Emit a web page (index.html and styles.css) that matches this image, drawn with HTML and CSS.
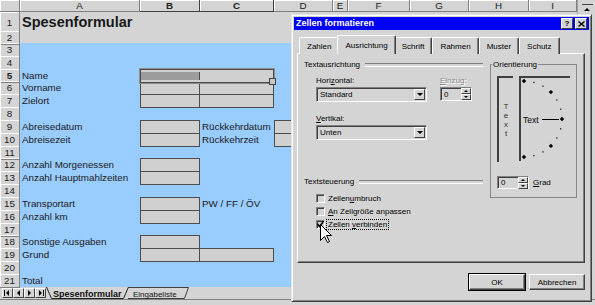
FILE: index.html
```html
<!DOCTYPE html>
<html lang="de">
<head>
    <meta charset="UTF-8">
    <title>Spesenformular - Zellen formatieren</title>
    <link rel="stylesheet" href="styles.css">
</head>
<body>
<div class="excel">
    <div class="sheet-area">
        <div class="sheet">
            <div class="row heads">
                <div class="corner"></div>
                <div class="ch">A</div>
                <div class="ch on">B</div>
                <div class="ch on">C</div>
                <div class="ch">D</div>
                <div class="ch">E</div>
                <div class="ch">F</div>
                <div class="ch">G</div>
                <div class="ch">H</div>
                <div class="ch">I</div>
            </div>
            <div class="row tall"><div class="rh">1</div><div class="a title">Spesenformular</div></div>
            <div class="row short"><div class="rh">2</div></div>
            <div class="row blue"><div class="rh">3</div></div>
            <div class="row blue"><div class="rh">4</div></div>
            <div class="row blue">
                <div class="rh on">5</div><div class="a">Name</div>
                <div class="sel"><span class="cur"></span><span></span></div>
            </div>
            <div class="row blue"><div class="rh">6</div><div class="a">Vorname</div><div class="b box"></div><div class="c box"></div></div>
            <div class="row blue"><div class="rh">7</div><div class="a">Zielort</div><div class="b box"></div><div class="c box"></div></div>
            <div class="row blue"><div class="rh">8</div></div>
            <div class="row blue"><div class="rh">9</div><div class="a">Abreisedatum</div><div class="b box"></div><div class="c">Rückkehrdatum</div><div class="d box"></div></div>
            <div class="row blue"><div class="rh">10</div><div class="a">Abreisezeit</div><div class="b box"></div><div class="c">Rückkehrzeit</div><div class="d box"></div></div>
            <div class="row blue"><div class="rh">11</div></div>
            <div class="row blue"><div class="rh">12</div><div class="a">Anzahl Morgenessen</div><div class="b box"></div></div>
            <div class="row blue"><div class="rh">13</div><div class="a">Anzahl Hauptmahlzeiten</div><div class="b box"></div></div>
            <div class="row blue"><div class="rh">14</div></div>
            <div class="row blue"><div class="rh">15</div><div class="a">Transportart</div><div class="b box"></div><div class="c">PW / FF / ÖV</div></div>
            <div class="row blue"><div class="rh">16</div><div class="a">Anzahl km</div><div class="b box"></div></div>
            <div class="row blue"><div class="rh">17</div></div>
            <div class="row blue"><div class="rh">18</div><div class="a">Sonstige Ausgaben</div><div class="b box"></div></div>
            <div class="row blue"><div class="rh">19</div><div class="a">Grund</div><div class="b box"></div><div class="c box"></div></div>
            <div class="row blue"><div class="rh">20</div></div>
            <div class="row blue"><div class="rh">21</div><div class="a">Total</div></div>
        </div>
        <div class="vscroll">
            <div class="split"></div>
            <div class="arrow-up"></div>
        </div>
    </div>

    <div class="tabbar">
        <div class="nav">
            <span class="nav-btn"><svg width="7" height="6" viewBox="0 0 7 6"><rect x="0" y="0" width="1" height="6"/><path d="M5 0 L2 3 L5 6 Z"/></svg></span>
            <span class="nav-btn"><svg width="5" height="6" viewBox="0 0 5 6"><path d="M4 0 L1 3 L4 6 Z"/></svg></span>
            <span class="nav-btn"><svg width="5" height="6" viewBox="0 0 5 6"><path d="M1 0 L4 3 L1 6 Z"/></svg></span>
            <span class="nav-btn"><svg width="7" height="6" viewBox="0 0 7 6"><path d="M2 0 L5 3 L2 6 Z"/><rect x="6" y="0" width="1" height="6"/></svg></span>
        </div>
        <svg class="sheet-tabs" width="150" height="12" viewBox="0 0 150 12">
            <path d="M78 0.5 L142.5 0.5 L138.5 11.5 L82 11.5" fill="#d4d4d4" stroke="#404040"/>
            <text x="87" y="9.5" class="tab-text">Eingabeliste</text>
            <path d="M0.5 0 L5.5 11.5 L77.5 11.5 L82.5 0" fill="#d4d4d4" stroke="#202020"/>
            <text x="7" y="9.5" class="tab-text active">Spesenformular</text>
        </svg>
    </div>

    <div class="dialog">
        <div class="titlebar">
            <span class="caption">Zellen formatieren</span>
            <span class="tb-btn">?</span>
            <span class="tb-btn"><svg width="7" height="6" viewBox="0 0 7 6"><path d="M0.5 0.5 L6.5 5.5 M6.5 0.5 L0.5 5.5" stroke="#000" stroke-width="1.4"/></svg></span>
        </div>

        <div class="tabs">
            <div class="tab">Zahlen</div>
            <div class="tab current">Ausrichtung</div>
            <div class="tab">Schrift</div>
            <div class="tab">Rahmen</div>
            <div class="tab">Muster</div>
            <div class="tab">Schutz</div>
        </div>

        <div class="panel">
            <div class="left">
                <div class="sec">Textausrichtung</div>
                <div class="fields">
                    <div class="field">
                        <div class="lbl">Hori<u>z</u>ontal:</div>
                        <div class="select">Standard<span class="drop"><i class="down"></i></span></div>
                    </div>
                    <div class="field">
                        <div class="lbl dim"><u>E</u>inzug:</div>
                        <div class="spin">0<span class="spin-btns"><span><i class="up"></i></span><span><i class="down"></i></span></span></div>
                    </div>
                </div>
                <div class="field vert">
                    <div class="lbl"><u>V</u>ertikal:</div>
                    <div class="select">Unten<span class="drop"><i class="down"></i></span></div>
                </div>

                <div class="sec steuerung">Textsteuerung</div>
                <div class="checks">
                    <div class="check"><span class="cb"></span><span>Zeilen<u>u</u>mbruch</span></div>
                    <div class="check"><span class="cb"></span><span><u>A</u>n Zellgröße anpassen</span></div>
                    <div class="check"><span class="cb"><svg width="7" height="7" viewBox="0 0 7 7"><path d="M0.5 3 L2.5 5.5 L6.5 0.5" fill="none" stroke="#000" stroke-width="1.5"/></svg></span><span class="focus">Zellen <u>v</u>erbinden</span></div>
                </div>
            </div>

            <fieldset class="orient">
                <legend>Orientierung</legend>
                <div class="dials">
                    <div class="vtext"><span>T</span><span>e</span><span>x</span><span>t</span></div>
                    <div class="dial">
                        <svg width="49" height="83" viewBox="0 0 49 83">
                            <g fill="#000">
                                <rect x="12.3" y="3.8" width="1.2" height="1.2"/>
                                <rect x="21.4" y="7.6" width="1.2" height="1.2"/>
                                <rect x="35.3" y="21.4" width="1.2" height="1.2"/>
                                <rect x="39.1" y="30.6" width="1.2" height="1.2"/>
                                <rect x="39.1" y="50.2" width="1.2" height="1.2"/>
                                <rect x="35.3" y="59.4" width="1.2" height="1.2"/>
                                <rect x="21.4" y="73.3" width="1.2" height="1.2"/>
                                <rect x="12.3" y="77.1" width="1.2" height="1.2"/>
                                <path d="M3 0.8 L5.2 3 L3 5.2 L0.8 3 Z"/>
                                <path d="M29.9 11.9 L32.1 14.1 L29.9 16.3 L27.7 14.1 Z"/>
                                <path d="M41 38.8 L43.2 41 L41 43.2 L38.8 41 Z"/>
                                <path d="M29.9 65.7 L32.1 67.9 L29.9 70.1 L27.7 67.9 Z"/>
                                <path d="M3 76.8 L5.2 79 L3 81.2 L0.8 79 Z"/>
                            </g>
                            <path d="M21 41.5 L38 41.5" stroke="#000"/>
                            <text x="2" y="44.5" class="dial-text">Text</text>
                        </svg>
                    </div>
                </div>
                <div class="grad">
                    <div class="spin">0<span class="spin-btns"><span><i class="up"></i></span><span><i class="down"></i></span></span></div>
                    <span><u>G</u>rad</span>
                </div>
            </fieldset>
        </div>

        <div class="buttons">
            <div class="btn default">OK</div>
            <div class="btn">Abbrechen</div>
        </div>
    </div>

    <svg class="cursor" width="13" height="20" viewBox="0 0 13 20">
        <path d="M0.5 0.5 L0.5 16.5 L4.5 12.5 L7.5 18.5 L9.5 17.5 L6.5 11.5 L11.5 11.5 Z" fill="#fff" stroke="#000"/>
    </svg>
</div>
</body>
</html>
```

FILE: styles.css
```css
* {
    box-sizing: border-box;
}

body {
    margin: 0;
    background: #d4d4d4;
    font-family: "Liberation Sans", Arial, sans-serif;
    color: #000;
}

.excel {
    position: relative;
    width: 595px;
    height: 305px;
    overflow: hidden;
    background: #d4d4d4;
}

/* spreadsheet */
.sheet-area {
    display: flex;
    height: 287px;
}

.sheet {
    width: 577px;
}

.row {
    display: grid;
    grid-template-columns: 20px 120px 60px 74px 59px 15px 62px 59px 60px 48px;
    height: 12.84px;
    font-size: 9.8px;
    line-height: 13px;
}

.row.heads {
    height: 12px;
    line-height: 11px;
}

.row.tall {
    height: 19px;
}

.row.short {
    height: 12px;
}

.row.blue {
    background: linear-gradient(to right, transparent 20px, #99ccff 20px, #99ccff 333px, transparent 333px);
}

.corner, .ch, .rh {
    border-right: 1px solid #808080;
    border-bottom: 1px solid #808080;
    box-shadow: inset 1px 1px #fff;
    text-align: center;
    color: #202020;
}

.ch.on {
    font-weight: bold;
    border-right-color: #404040;
    border-bottom-color: #404040;
}

.rh {
    grid-column: 1;
}

.rh.on {
    font-weight: bold;
}

.row.tall .rh {
    padding-top: 4px;
}

.a, .b, .c, .d {
    white-space: nowrap;
    padding-left: 2px;
    color: #1a1a1a;
}

.a { grid-column: 2; }
.b { grid-column: 3; }
.c { grid-column: 4; }
.d { grid-column: 5; }

.title {
    grid-column: 2 / 6;
    font-size: 14.5px;
    font-weight: bold;
    line-height: 19px;
    padding-top: 1px;
    color: #181818;
}

.box {
    border: 1px solid #4c4c4c;
    background: #d0d0d0;
}

.b.box + .c.box {
    border-left: 0;
}

.sel {
    grid-column: 3 / 5;
    display: flex;
    position: relative;
    border: 1px solid #4c4c4c;
    outline: 1px solid #8c8c8c;
    background: #d0d0d0;
}

.sel span {
    flex: 1;
}

.sel .cur {
    flex: none;
    width: 59px;
    margin: 2px 0;
    background: #9c9c9c;
    border-right: 1px solid #4c4c4c;
}

.sel::after {
    content: '';
    position: absolute;
    right: -3px;
    bottom: -3px;
    width: 5px;
    height: 5px;
    border: 1px solid #404040;
    background: #c8c8c8;
}

.vscroll {
    width: 18px;
    border-left: 1px solid #a0a0a0;
}

.vscroll .split {
    height: 5px;
    margin: 0 2px 0 4px;
    border-bottom: 1px solid #404040;
}

.vscroll .arrow-up {
    display: flex;
    justify-content: center;
    padding-top: 3px;
}

.vscroll .arrow-up::before {
    content: '';
    border: 3px solid transparent;
    border-top: 0;
    border-bottom: 3px solid #000;
}

/* sheet tabs */
.tabbar {
    display: flex;
    height: 13px;
    border-bottom: 1px solid #808080;
}

.nav {
    display: flex;
    padding: 1px 0 0 2px;
}

.nav-btn {
    display: flex;
    align-items: center;
    justify-content: center;
    width: 11px;
    height: 10px;
    border: 1px solid;
    border-color: #fff #404040 #404040 #fff;
}

.nav-btn svg {
    fill: #000;
}

.sheet-tabs {
    display: block;
}

.tab-text {
    font-family: "Liberation Sans", Arial, sans-serif;
    font-size: 8px;
    fill: #101010;
}

.tab-text.active {
    font-size: 9px;
    font-weight: bold;
}

/* dialog */
.dialog {
    position: absolute;
    left: 291px;
    top: 14px;
    width: 301px;
    height: 288px;
    padding: 2px;
    background: #d4d4d4;
    border: 1px solid;
    border-color: #e4e4e4 #404040 #404040 #e4e4e4;
    box-shadow: inset 1px 1px #fff, inset -1px -1px #808080;
    font-size: 8px;
    line-height: 9px;
}

.titlebar {
    display: flex;
    align-items: center;
    gap: 2px;
    height: 13px;
    padding: 0 2px 0 2px;
    background: #0000f4;
}

.caption {
    flex: 1;
    color: #fff;
    font-size: 9px;
    font-weight: bold;
}

.tb-btn {
    display: flex;
    align-items: center;
    justify-content: center;
    width: 12px;
    height: 11px;
    background: #d4d4d4;
    border: 1px solid;
    border-color: #fff #404040 #404040 #fff;
    font-weight: bold;
    font-size: 8px;
}

.tabs {
    display: flex;
    align-items: flex-end;
    height: 19px;
    margin: 5px 0 -1px 5px;
    position: relative;
    z-index: 1;
}

.tab {
    height: 17px;
    padding: 4px 7px 0;
    border: 1px solid;
    border-bottom: 0;
    border-color: #fff #404040 #404040 #fff;
    border-radius: 2px 2px 0 0;
    background: #d4d4d4;
    box-shadow: inset -1px 0 #808080;
}

.tab.current {
    height: 19px;
    margin: 0 -2px;
    padding-top: 5px;
    position: relative;
    z-index: 1;
}

.panel {
    display: grid;
    grid-template-columns: 179px 87px;
    column-gap: 7px;
    height: 210px;
    margin: 0 4px 0 3px;
    padding: 6px 6px 0 6px;
    border: 1px solid;
    border-color: #fff #404040 #404040 #fff;
    box-shadow: inset -1px -1px #808080;
}

.sec {
    display: flex;
    align-items: center;
    gap: 5px;
}

.sec::after {
    content: '';
    flex: 1;
    height: 2px;
    border-top: 1px solid #808080;
    border-bottom: 1px solid #fff;
}

.fields {
    display: flex;
    gap: 13px;
    margin-top: 7px;
}

.field {
    padding-left: 12px;
}

.fields .field + .field {
    padding-left: 0;
}

.field.vert {
    margin-top: 12px;
}

.lbl {
    margin-bottom: 2px;
}

.lbl.dim {
    color: #8a8a8a;
    text-shadow: 1px 1px #fff;
}

.select {
    display: flex;
    align-items: center;
    width: 111px;
    height: 15px;
    padding: 0 1px 0 3px;
    border: 1px solid;
    border-color: #808080 #fff #fff #808080;
    box-shadow: inset 1px 1px #404040;
}

.drop {
    display: flex;
    align-items: center;
    justify-content: center;
    width: 11px;
    height: 11px;
    margin-left: auto;
    border: 1px solid;
    border-color: #fff #404040 #404040 #fff;
}

i.down, i.up {
    display: block;
    border: 3px solid transparent;
}

i.down {
    border-bottom: 0;
    border-top: 3px solid #000;
}

i.up {
    border-top: 0;
    border-bottom: 3px solid #000;
}

.spin-btns i.down, .spin-btns i.up {
    border-width: 2px;
}

.spin {
    display: flex;
    align-items: center;
    width: 32px;
    height: 14px;
    padding-left: 3px;
    border: 1px solid;
    border-color: #808080 #fff #fff #808080;
    box-shadow: inset 1px 1px #404040;
}

.spin-btns {
    display: flex;
    flex-direction: column;
    width: 10px;
    height: 12px;
    margin-left: auto;
}

.spin-btns span {
    flex: 1;
    display: flex;
    align-items: center;
    justify-content: center;
    border: 1px solid;
    border-color: #fff #404040 #404040 #fff;
}

.sec.steuerung {
    margin-top: 37px;
}

.checks {
    margin-top: 6px;
}

.check {
    display: flex;
    align-items: center;
    gap: 3px;
    height: 13px;
    padding-left: 12px;
}

.cb {
    display: flex;
    align-items: center;
    justify-content: center;
    width: 9px;
    height: 9px;
    border: 1px solid;
    border-color: #808080 #fff #fff #808080;
    box-shadow: inset 1px 1px #404040;
}

.focus {
    outline: 1px dotted #000;
    padding: 0 1px;
    margin-left: -1px;
}

.orient {
    margin: 0;
    padding: 7px 0 10px 6px;
    border: 1px solid #888;
    height: 138px;
}

.orient legend {
    margin-left: -5px;
    padding: 0 1px;
    line-height: 9px;
}

.dials {
    display: flex;
    gap: 6px;
}

.vtext, .dial {
    border-top: 2px solid #404040;
    border-left: 2px solid #404040;
}

.vtext {
    display: flex;
    flex-direction: column;
    align-items: center;
    justify-content: center;
    width: 16px;
    height: 86px;
    color: #303030;
}

.vtext span {
    line-height: 9px;
}

.dial {
    width: 51px;
    height: 85px;
}

.dial svg {
    display: block;
}

.dial-text {
    font-family: "Liberation Sans", Arial, sans-serif;
    font-size: 8.5px;
}

.grad {
    display: flex;
    align-items: center;
    gap: 4px;
    margin-top: 14px;
}

.grad .spin {
    height: 13px;
}

.buttons {
    display: flex;
    justify-content: flex-end;
    gap: 4px;
    margin: 11px 4px 0 0;
}

.btn {
    display: flex;
    align-items: center;
    justify-content: center;
    width: 56px;
    height: 16px;
    border: 1px solid;
    border-color: #fff #404040 #404040 #fff;
    box-shadow: inset -1px -1px #808080;
}

.btn.default {
    outline: 1px solid #000;
    outline-offset: 0;
    border-color: #fff #404040 #404040 #fff;
}

.cursor {
    position: absolute;
    left: 320px;
    top: 224px;
}
```
